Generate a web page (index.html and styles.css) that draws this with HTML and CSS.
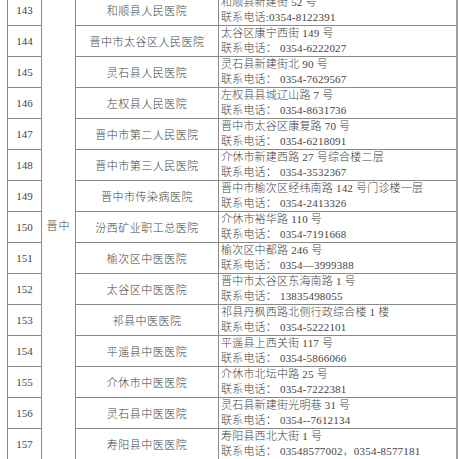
FILE: index.html
```html
<!DOCTYPE html>
<html lang="zh-CN">
<head>
<meta charset="utf-8">
<title>医院名单</title>
<link rel="stylesheet" href="styles.css">
</head>
<body>
<div class="sheet">
<table class="list">
<colgroup>
<col class="c-no"><col class="c-area"><col class="c-name"><col class="c-addr">
</colgroup>
<tbody>
<tr><td class="no">143</td><td class="area" rowspan="16">晋中</td><td class="name">和顺县人民医院</td><td class="addr">和顺县新建街 52 号<br>联系电话:0354-8122391</td></tr>
<tr><td class="no">144</td><td class="name">晋中市太谷区人民医院</td><td class="addr">太谷区康宁西街 149 号<br>联系电话： 0354-6222027</td></tr>
<tr><td class="no">145</td><td class="name">灵石县人民医院</td><td class="addr">灵石县新建街北 90 号<br>联系电话： 0354-7629567</td></tr>
<tr><td class="no">146</td><td class="name">左权县人民医院</td><td class="addr">左权县县城辽山路 7 号<br>联系电话： 0354-8631736</td></tr>
<tr><td class="no">147</td><td class="name">晋中市第二人民医院</td><td class="addr">晋中市太谷区康复路 70 号<br>联系电话： 0354-6218091</td></tr>
<tr><td class="no">148</td><td class="name">晋中市第三人民医院</td><td class="addr">介休市新建西路 27 号综合楼二层<br>联系电话： 0354-3532367</td></tr>
<tr><td class="no">149</td><td class="name">晋中市传染病医院</td><td class="addr">晋中市榆次区经纬南路 142 号门诊楼一层<br>联系电话： 0354-2413326</td></tr>
<tr><td class="no">150</td><td class="name">汾西矿业职工总医院</td><td class="addr">介休市裕华路 110 号<br>联系电话： 0354-7191668</td></tr>
<tr><td class="no">151</td><td class="name">榆次区中医医院</td><td class="addr">榆次区中都路 246 号<br>联系电话： 0354—3999388</td></tr>
<tr><td class="no">152</td><td class="name">太谷区中医医院</td><td class="addr">晋中市太谷区东海南路 1 号<br>联系电话： 13835498055</td></tr>
<tr><td class="no">153</td><td class="name">祁县中医医院</td><td class="addr">祁县丹枫西路北侧行政综合楼 1 楼<br>联系电话： 0354-5222101</td></tr>
<tr><td class="no">154</td><td class="name">平遥县中医医院</td><td class="addr">平遥县上西关街 117 号<br>联系电话： 0354-5866066</td></tr>
<tr><td class="no">155</td><td class="name">介休市中医医院</td><td class="addr">介休市北坛中路 25 号<br>联系电话： 0354-7222381</td></tr>
<tr><td class="no">156</td><td class="name">灵石县中医医院</td><td class="addr">灵石县新建街光明巷 31 号<br>联系电话： 0354--7612134</td></tr>
<tr><td class="no">157</td><td class="name">寿阳县中医医院</td><td class="addr">寿阳县西北大街 1 号<br>联系电话： 03548577002，0354-8577181</td></tr>
<tr><td class="no">158</td><td class="name">临汾市人民医院</td><td class="addr">临汾市尧都区滨河西路彩虹桥西<br>联系电话： 0357-2063310</td></tr>
</tbody>
</table>
</div>
</body>
</html>
```

FILE: styles.css
```css
html, body {
  margin: 0;
  padding: 0;
  background: #ffffff;
}

body {
  height: 459px;
  overflow: hidden;
}

.sheet {
  padding-left: 7px;
  margin-top: -6px;
}

.list {
  border-collapse: collapse;
  table-layout: fixed;
  width: 449px;
  font-family: "Liberation Serif", "Noto Sans CJK SC", serif;
  font-size: 11px;
  font-weight: 300;
  color: #444444;
}

.c-no { width: 34px; }
.c-area { width: 34px; }
.c-name { width: 143px; }
.c-addr { width: 238px; }

.list td {
  border: 1px solid #8a8a8a;
  height: 30.2px;
  padding: 0;
  box-sizing: border-box;
  vertical-align: middle;
  white-space: nowrap;
  overflow: hidden;
}

.list td.addr {
  border-right: 2px solid #a0a0a0;
}

.no {
  text-align: center;
  font-size: 11px;
}

.area {
  text-align: center;
  letter-spacing: 1px;
  padding-bottom: 36px !important;
}

.name {
  text-align: center;
  letter-spacing: 0.5px;
}

.addr {
  text-align: left;
  padding-left: 2px !important;
  line-height: 15px;
  letter-spacing: 0.2px;
}
```
